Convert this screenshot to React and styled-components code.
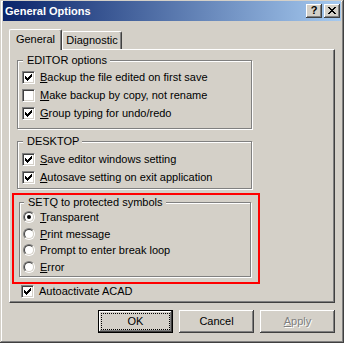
import React from 'react';
import styled, { createGlobalStyle } from 'styled-components';

const Global = createGlobalStyle`
  html, body { margin: 0; padding: 0; background: #D4D0C8; }
  body { font-family: "Liberation Sans", Arial, sans-serif; font-size: 11px; color: #000; }
  * { box-sizing: border-box; }
`;

const Window = styled.div`
  width: 344px;
  height: 343px;
  background: #D4D0C8;
  padding: 1px 3px 3px 3px;
  box-shadow: inset -1px -1px 0 #404040, inset 1px 1px 0 #D4D0C8,
    inset -2px -2px 0 #808080, inset 2px 2px 0 #FFFFFF;
  display: flex;
  flex-direction: column;
`;

const TitleBar = styled.div`
  height: 20px;
  display: flex;
  align-items: center;
  padding-left: 2px;
  padding-right: 1px;
  background: linear-gradient(to right, #0A246A, #A6CAF0);
  color: #fff;
  font-weight: bold;
  font-size: 11px;
`;

const TitleText = styled.span`
  flex: 1;
  white-space: nowrap;
`;

const CaptionButtons = styled.div`
  display: flex;
  gap: 2px;
`;

const CaptionButton = styled.div`
  width: 16px;
  height: 14px;
  background: #D4D0C8;
  box-shadow: inset -1px -1px 0 #404040, inset 1px 1px 0 #FFFFFF, inset -2px -2px 0 #808080;
  display: flex;
  align-items: center;
  justify-content: center;
  color: #000;
  font-weight: bold;
  font-size: 11px;
  line-height: 11px;
  padding-bottom: 1px;
`;

const Body = styled.div`
  padding: 8px 0 0 6px;
  display: flex;
  flex-direction: column;
`;

const TabStrip = styled.div`
  height: 20px;
  display: flex;
  align-items: flex-end;
`;

const Tab = styled.div`
  position: relative;
  z-index: ${p => (p.$active ? 1 : 0)};
  width: ${p => p.$w}px;
  height: ${p => (p.$active ? 21 : 18)}px;
  margin-bottom: ${p => (p.$active ? -1 : 0)}px;
  background: #D4D0C8;
  border-top: 1px solid #fff;
  border-left: 1px solid #fff;
  border-right: 1px solid #404040;
  border-radius: 2px 2px 0 0;
  box-shadow: inset -1px 0 0 #808080;
  display: flex;
  align-items: center;
  justify-content: center;
  padding-bottom: ${p => (p.$active ? 3 : 1)}px;
  white-space: nowrap;
`;

const Panel = styled.div`
  width: 326px;
  height: 254px;
  border-top: 1px solid #fff;
  border-left: 1px solid #fff;
  border-right: 1px solid #404040;
  border-bottom: 1px solid #404040;
  box-shadow: inset -1px -1px 0 #808080;
  padding: 4px 0 0 2px;
  display: flex;
  flex-direction: column;
`;

const Group = styled.fieldset`
  margin: ${p => p.$mt || 0}px 0 0 ${p => p.$ml || 0}px;
  width: ${p => p.$w}px;
  min-width: 0;
  border: 1px solid #808080;
  box-shadow: 1px 1px 0 #fff, inset 1px 1px 0 #fff;
  padding: ${p => p.$pt}px 0 ${p => p.$pb}px ${p => p.$pl}px;
`;

const Legend = styled.legend`
  margin-left: 1px;
  padding: 0 3px 0 4px;
  line-height: 13px;
  font-size: 11px;
  background: #D4D0C8;
  white-space: nowrap;
`;

const Row = styled.div`
  height: ${p => p.$h}px;
  display: flex;
  align-items: center;
  gap: 5px;
  margin-left: ${p => p.$ml || 0}px;
  white-space: nowrap;
`;

const CheckBox = styled.div`
  width: 13px;
  height: 13px;
  flex: none;
  background: #fff;
  border: 1px solid;
  border-color: #808080 #fff #fff #808080;
  box-shadow: inset 1px 1px 0 #404040, inset -1px -1px 0 #D4D0C8;
  display: flex;
  align-items: center;
  justify-content: center;
`;

const RadioOuter = styled.div`
  width: 12px;
  height: 12px;
  flex: none;
  border-radius: 50%;
  border: 1px solid;
  border-color: #808080 #fff #fff #808080;
  display: flex;
`;

const RadioInner = styled.div`
  flex: 1;
  border-radius: 50%;
  border: 1px solid;
  border-color: #404040 #D4D0C8 #D4D0C8 #404040;
  background: #fff;
  display: flex;
  align-items: center;
  justify-content: center;
`;

const Dot = styled.div`
  width: 4px;
  height: 4px;
  border-radius: 50%;
  background: #000;
`;

const RedFrame = styled.div`
  margin-top: 4px;
  width: 248px;
  border: 2px solid #FF0000;
  padding: 1px 0 5px 5px;
`;

const ButtonRow = styled.div`
  width: 326px;
  margin-top: 7px;
  display: flex;
  justify-content: flex-end;
  gap: 6px;
`;

const Button = styled.div`
  width: 75px;
  height: 23px;
  background: #D4D0C8;
  display: flex;
  align-items: stretch;
  justify-content: center;
  padding: ${p => (p.$default ? 2 : 3)}px;
  border: ${p => (p.$default ? '1px solid #000' : 'none')};
  box-shadow: inset -1px -1px 0 #404040, inset 1px 1px 0 #fff, inset -2px -2px 0 #808080;
  color: ${p => (p.$disabled ? '#808080' : '#000')};
  text-shadow: ${p => (p.$disabled ? '1px 1px 0 #fff' : 'none')};
`;

const ButtonLabel = styled.div`
  flex: 1;
  display: flex;
  align-items: center;
  justify-content: center;
  border: 1px ${p => (p.$focus ? 'dotted #000' : 'solid transparent')};
  padding-bottom: 1px;
`;

const Check = () => (
  <svg width="7" height="7" viewBox="0 0 7 7" shapeRendering="crispEdges">
    <path
      d="M0 2h1v3H0z M1 3h1v3H1z M2 4h1v3H2z M3 3h1v3H3z M4 2h1v3H4z M5 1h1v3H5z M6 0h1v3H6z"
      fill="#000"
    />
  </svg>
);

const CloseGlyph = () => (
  <svg width="8" height="7" viewBox="0 0 8 7" shapeRendering="crispEdges">
    <path
      d="M0 0h2v1H0z M6 0h2v1H6z M1 1h2v1H1z M5 1h2v1H5z M2 2h4v1H2z M3 3h2v1H3z M2 4h4v1H2z M1 5h2v1H1z M5 5h2v1H5z M0 6h2v1H0z M6 6h2v1H6z"
      fill="#000"
    />
  </svg>
);

const CheckItem = ({ checked, h = 18, ml, children }) => (
  <Row $h={h} $ml={ml}>
    <CheckBox>{checked && <Check />}</CheckBox>
    <span>{children}</span>
  </Row>
);

const RadioItem = ({ checked, children }) => (
  <Row $h={16.5}>
    <RadioOuter>
      <RadioInner>{checked && <Dot />}</RadioInner>
    </RadioOuter>
    <span>{children}</span>
  </Row>
);

export default function App() {
  return (
    <>
      <Global />
      <Window>
        <TitleBar>
          <TitleText>General Options</TitleText>
          <CaptionButtons>
            <CaptionButton>?</CaptionButton>
            <CaptionButton><CloseGlyph /></CaptionButton>
          </CaptionButtons>
        </TitleBar>
        <Body>
          <TabStrip>
            <Tab $active $w={53}>General</Tab>
            <Tab $w={60}>Diagnostic</Tab>
          </TabStrip>
          <Panel>
            <Group $ml={5} $w={235} $pt={1} $pb={6} $pl={4}>
              <Legend>EDITOR options</Legend>
              <CheckItem checked><u>B</u>ackup the file edited on first save</CheckItem>
              <CheckItem><u>M</u>ake backup by copy, not rename</CheckItem>
              <CheckItem checked><u>G</u>roup typing for undo/redo</CheckItem>
            </Group>
            <Group $ml={5} $mt={6} $w={235} $pt={2} $pb={2} $pl={4}>
              <Legend>DESKTOP</Legend>
              <CheckItem checked><u>S</u>ave editor windows setting</CheckItem>
              <CheckItem checked><u>A</u>utosave setting on exit application</CheckItem>
            </Group>
            <RedFrame>
              <Group $w={232} $pt={0} $pb={1} $pl={3}>
                <Legend>SETQ to protected symbols</Legend>
                <RadioItem checked><u>T</u>ransparent</RadioItem>
                <RadioItem><u>P</u>rint message</RadioItem>
                <RadioItem>Prompt to enter break loop</RadioItem>
                <RadioItem><u>E</u>rror</RadioItem>
              </Group>
            </RedFrame>
            <CheckItem checked h={14} ml={9}>Autoactivate ACAD</CheckItem>
          </Panel>
          <ButtonRow>
            <Button $default><ButtonLabel $focus>OK</ButtonLabel></Button>
            <Button><ButtonLabel>Cancel</ButtonLabel></Button>
            <Button $disabled><ButtonLabel><span><u>A</u>pply</span></ButtonLabel></Button>
          </ButtonRow>
        </Body>
      </Window>
    </>
  );
}
